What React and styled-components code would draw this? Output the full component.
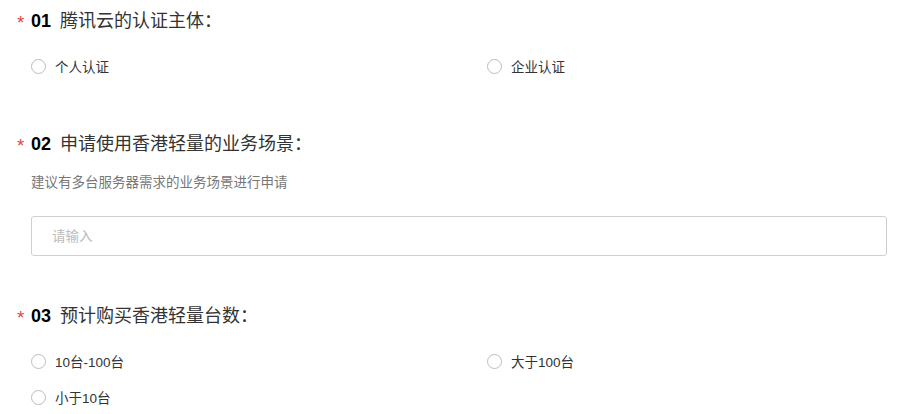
import React, { useState } from "react";
import styled, { createGlobalStyle } from "styled-components";

const GlobalStyle = createGlobalStyle`
  html, body {
    margin: 0;
    padding: 0;
    background: #fff;
  }
  body {
    font-family: "Liberation Sans", "Noto Sans CJK SC", sans-serif;
    color: #333;
  }
`;

const Page = styled.div`
  width: 911px;
  box-sizing: border-box;
  padding: 9px 24px 0 17px;
`;

const Section = styled.div`
  margin-bottom: ${({ gap }) => (gap !== undefined ? gap : 48)}px;
`;

const TitleRow = styled.div`
  display: flex;
  align-items: center;
  height: 24px;
`;

const Star = styled.span`
  width: 14px;
  color: #e8423f;
  font-size: 19px;
  line-height: 16px;
  align-self: flex-start;
  margin-top: 6px;
`;

const Num = styled.span`
  font-size: 18px;
  font-weight: bold;
  color: #000;
  margin-right: 9px;
`;

const TitleText = styled.span`
  font-size: 18px;
  color: #333;
  line-height: 24px;
`;

const Body = styled.div`
  margin-left: 14px;
`;

const Options = styled.div`
  display: grid;
  grid-template-columns: 456px 1fr;
  row-gap: 14px;
  margin-top: 22px;
`;

const Option = styled.label`
  display: flex;
  align-items: center;
  height: 22px;
  cursor: pointer;
`;

const Circle = styled.span`
  width: 15px;
  height: 15px;
  box-sizing: border-box;
  border-radius: 50%;
  border: 1px solid ${({ checked }) => (checked ? "#006eff" : "#bcbcbc")};
  margin-right: 9px;
  display: flex;
  align-items: center;
  justify-content: center;
  &::after {
    content: "";
    width: 7px;
    height: 7px;
    border-radius: 50%;
    background: ${({ checked }) => (checked ? "#006eff" : "transparent")};
  }
`;

const OptionText = styled.span`
  font-size: 13.5px;
  color: #333;
`;

const Hint = styled.div`
  margin-top: 17px;
  font-size: 13.5px;
  line-height: 20px;
  color: #777;
`;

const Input = styled.input`
  display: block;
  margin-top: 23px;
  width: 856px;
  height: 40px;
  box-sizing: border-box;
  border: 1px solid #cfcfcf;
  border-radius: 3px;
  padding: 0 20px;
  font-family: "Liberation Sans", "Noto Sans CJK SC", sans-serif;
  font-size: 13.5px;
  color: #333;
  outline: none;
  &::placeholder {
    color: #bbb;
  }
`;

function Title({ num, children }) {
  return (
    <TitleRow>
      <Star>*</Star>
      <Num>{num}</Num>
      <TitleText>{children}</TitleText>
    </TitleRow>
  );
}

function RadioGroup({ items }) {
  const [value, setValue] = useState(null);
  return (
    <Options>
      {items.map((item) => (
        <Option key={item} onClick={() => setValue(item)}>
          <Circle checked={value === item} />
          <OptionText>{item}</OptionText>
        </Option>
      ))}
    </Options>
  );
}

export default function App() {
  return (
    <Page>
      <GlobalStyle />
      <Section gap={55}>
        <Title num="01">腾讯云的认证主体：</Title>
        <Body>
          <RadioGroup items={["个人认证", "企业认证"]} />
        </Body>
      </Section>

      <Section>
        <Title num="02">申请使用香港轻量的业务场景：</Title>
        <Body>
          <Hint>建议有多台服务器需求的业务场景进行申请</Hint>
          <Input placeholder="请输入" />
        </Body>
      </Section>

      <Section gap={0}>
        <Title num="03">预计购买香港轻量台数：</Title>
        <Body>
          <RadioGroup items={["10台-100台", "大于100台", "小于10台"]} />
        </Body>
      </Section>
    </Page>
  );
}
